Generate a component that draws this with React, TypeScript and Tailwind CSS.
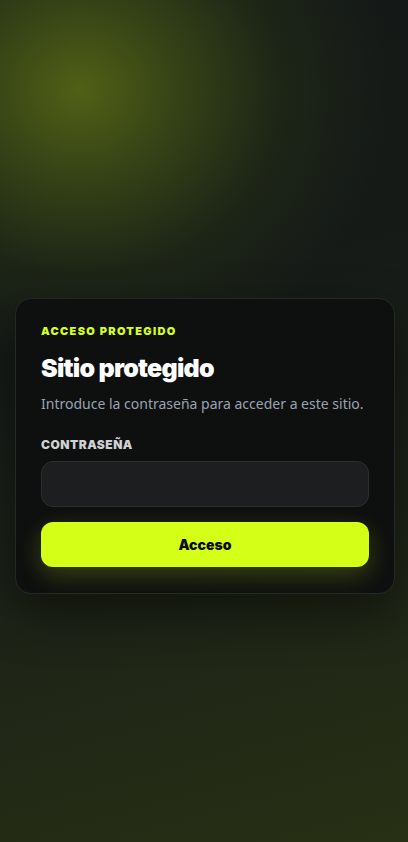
import { useState } from 'react';

export default function App() {
  const [password, setPassword] = useState('');

  return (
    <div className="min-h-[842px] w-full flex items-center pl-[15px] pt-[50px] font-['Noto_Sans',sans-serif] bg-[#151a17] bg-[radial-gradient(ellipse_310px_280px_at_80px_90px,rgba(84,100,22,0.95)_0%,rgba(66,82,22,0.75)_30%,rgba(42,54,22,0.4)_65%,rgba(22,28,22,0)_100%),linear-gradient(165deg,#141917_0%,#151a17_35%,#1b2218_60%,#272f14_100%)]">
      <div className="w-[380px] rounded-2xl border border-[#262826] bg-[#0e0f0f]/95 px-[25px] pt-[24px] pb-[26px] shadow-[0_20px_50px_rgba(0,0,0,0.45)]">
        <p className="font-['Inter',sans-serif] text-[11px] font-black tracking-[0.12em] text-[#d4ff1a] leading-4">
          ACCESO PROTEGIDO
        </p>
        <h1 className="mt-[13px] font-['Inter',sans-serif] text-[25px] font-black text-white leading-8 tracking-[-0.03em]">
          Sitio protegido
        </h1>
        <p className="mt-[8px] text-[14px] text-[#9aa3b3] leading-6">
          Introduce la contraseña para acceder a este sitio.
        </p>

        <form className="mt-[21px] flex flex-col" onSubmit={(e) => e.preventDefault()}>
          <label className="font-['Inter',sans-serif] text-[12px] font-black tracking-[0.04em] text-[#cfd1d3] leading-4">
            CONTRASEÑA
          </label>
          <input
            type="password"
            value={password}
            onChange={(e) => setPassword(e.target.value)}
            className="mt-[8px] h-[46px] w-full rounded-xl border border-[#2c2e2f] bg-[#1c1e1f] px-4 text-white outline-none"
          />
          <button
            type="submit"
            className="mt-[15px] h-[45px] w-full rounded-xl bg-[#d4ff16] font-['Inter',sans-serif] text-[14px] font-black text-[#0b0b0b] shadow-[0_8px_24px_rgba(212,255,22,0.22)]"
          >
            Acceso
          </button>
        </form>
      </div>
    </div>
  );
}
